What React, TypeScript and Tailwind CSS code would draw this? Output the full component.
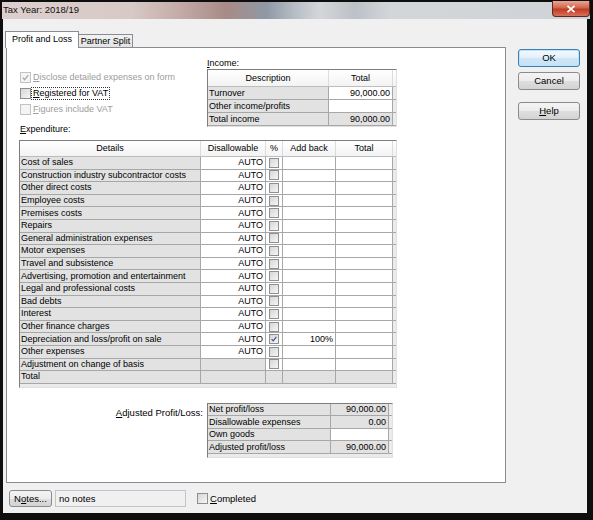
import React from "react";

const expenditure = [
  "Cost of sales",
  "Construction industry subcontractor costs",
  "Other direct costs",
  "Employee costs",
  "Premises costs",
  "Repairs",
  "General administration expenses",
  "Motor expenses",
  "Travel and subsistence",
  "Advertising, promotion and entertainment",
  "Legal and professional costs",
  "Bad debts",
  "Interest",
  "Other finance charges",
  "Depreciation and loss/profit on sale",
  "Other expenses",
  "Adjustment on change of basis",
  "Total",
];

function Tick({ color }: { color: string }) {
  return (
    <svg viewBox="0 0 10 10" className="w-full h-full">
      <polyline points="2,5.2 4,7.4 8,2.4" fill="none" stroke={color} strokeWidth="1.4" />
    </svg>
  );
}

function Box({ small, checked, disabled }: { small?: boolean; checked?: boolean; disabled?: boolean }) {
  const size = small ? "w-[10px] h-[10px]" : "w-[11px] h-[11px]";
  const look = disabled
    ? "border-[#c2c2c2] bg-[#f4f4f4]"
    : "border-[#8e8f8f] bg-[linear-gradient(135deg,#d4d6d8,#f6f6f6)]";
  return (
    <div className={`${size} ${look} border shrink-0 flex items-center justify-center`}>
      {checked && <Tick color={disabled ? "#a8a8a8" : "#3d4f8f"} />}
    </div>
  );
}

function WinButton({ children, primary }: { children: React.ReactNode; primary?: boolean }) {
  const look = primary
    ? "border-[#3c7fb1] bg-[linear-gradient(#f3f9fd,#e3f1fb_50%,#cfe7f7_51%,#c5e2f6)] shadow-[inset_0_0_0_1px_#bfe3fa]"
    : "border-[#8b8b8b] bg-[linear-gradient(#f4f4f4,#ececec_50%,#dedede_51%,#d3d3d3)]";
  return (
    <div className={`${look} w-[62px] h-[18px] border rounded-[3px] flex items-center justify-center text-[9.5px] text-black`}>
      {children}
    </div>
  );
}

function Cell({
  w,
  gray,
  right,
  center,
  children,
}: {
  w: string;
  gray?: boolean;
  right?: boolean;
  center?: boolean;
  children?: React.ReactNode;
}) {
  const align = right ? "justify-end pr-[2px]" : center ? "justify-center" : "pl-[1px]";
  return (
    <div
      className={`${w} ${gray ? "bg-[#e2e2e2]" : "bg-white"} ${align} h-full shrink-0 border-r border-[#a7a7a7] flex items-center whitespace-nowrap overflow-hidden`}
    >
      {children}
    </div>
  );
}

function HeadCell({ w, children }: { w: string; children?: React.ReactNode }) {
  return (
    <div className={`${w} h-full shrink-0 border-r border-[#dcdcdc] flex items-center justify-center`}>{children}</div>
  );
}

function IncomeTable() {
  const rows = [
    { label: "Turnover", value: "90,000.00", white: true },
    { label: "Other income/profits", value: "", white: true },
    { label: "Total income", value: "90,000.00", white: false },
  ];
  return (
    <div className="w-[190px] border border-t-[#7d7d7d] border-l-[#7d7d7d] border-r-[#e0e0e0] border-b-[#e0e0e0] bg-[#ebebeb]">
      <div className="h-[17px] flex bg-[linear-gradient(#ffffff,#f3f3f3)] border-b border-[#bdbdbd]">
        <HeadCell w="w-[121px]">Description</HeadCell>
        <HeadCell w="w-[64px]">Total</HeadCell>
      </div>
      {rows.map((r) => (
        <div key={r.label} className="h-[13px] flex border-b border-[#a7a7a7]">
          <Cell w="w-[121px]" gray>
            {r.label}
          </Cell>
          <Cell w="w-[64px]" gray={!r.white} right>
            {r.value}
          </Cell>
        </div>
      ))}
    </div>
  );
}

function ExpenditureTable() {
  return (
    <div className="w-[378px] border border-t-[#7d7d7d] border-l-[#7d7d7d] border-r-[#e0e0e0] border-b-[#e0e0e0] bg-[#ebebeb] pb-[3px]">
      <div className="h-[16px] flex bg-[linear-gradient(#ffffff,#f3f3f3)] border-b border-[#bdbdbd]">
        <HeadCell w="w-[181px]">Details</HeadCell>
        <HeadCell w="w-[65px]">Disallowable</HeadCell>
        <HeadCell w="w-[17px]">%</HeadCell>
        <HeadCell w="w-[53px]">Add back</HeadCell>
        <HeadCell w="w-[57px]">Total</HeadCell>
      </div>
      {expenditure.map((name) => {
        const isTotal = name === "Total";
        const isAdj = name.startsWith("Adjustment");
        const isDep = name.startsWith("Depreciation");
        return (
          <div key={name} className="h-[12.6px] flex border-b border-[#a7a7a7]">
            <Cell w="w-[181px]" gray>
              {name}
            </Cell>
            <Cell w="w-[65px]" gray={isTotal || isAdj} right>
              {!isTotal && !isAdj ? "AUTO" : ""}
            </Cell>
            <Cell w="w-[17px]" gray={isTotal} center>
              {!isTotal && <Box small checked={isDep} />}
            </Cell>
            <Cell w="w-[53px]" gray={isTotal} right>
              {isDep ? "100%" : ""}
            </Cell>
            <Cell w="w-[57px]" gray={isTotal} />
          </div>
        );
      })}
    </div>
  );
}

function AdjustedTable() {
  const rows = [
    { label: "Net profit/loss", value: "90,000.00", white: false },
    { label: "Disallowable expenses", value: "0.00", white: false },
    { label: "Own goods", value: "", white: true },
    { label: "Adjusted profit/loss", value: "90,000.00", white: false },
  ];
  return (
    <div className="w-[186px] border border-t-[#7d7d7d] border-l-[#7d7d7d] border-r-[#e0e0e0] border-b-[#e0e0e0] bg-[#ebebeb] pb-[3px]">
      {rows.map((r) => (
        <div key={r.label} className="h-[12.6px] flex border-b border-[#a7a7a7]">
          <Cell w="w-[123px]" gray>
            {r.label}
          </Cell>
          <Cell w="w-[58px]" gray={!r.white} right>
            {r.value}
          </Cell>
        </div>
      ))}
    </div>
  );
}

export default function App() {
  return (
    <div className="w-[593px] h-[520px] bg-[#0e0e0e] flex flex-col pl-[2px] pr-[3px] pb-[7px] font-['Liberation_Sans',Arial,sans-serif] text-[9px] text-black leading-none">
      {/* title bar */}
      <div className="h-[19px] shrink-0 flex items-start justify-between border-t-2 border-[#0e0e0e] bg-[linear-gradient(90deg,#dccfcd_0%,#d8c9c6_22%,#c4aca8_30%,#a88b87_38%,#8f99a6_45%,#b9bfc6_50%,#d4d6d9_54%,#bcc1c7_60%,#d3d6d9_66%,#cfd3d7_100%)]">
        <div className="pl-[1px] pt-[3px] text-[9.5px] text-[#111]">Tax Year: 2018/19</div>
        <div className="w-[38px] h-[16px] -mt-[1px] rounded-b-[4px] border border-t-0 border-[#5e2a20] bg-[linear-gradient(#e8a594,#d2664f_45%,#c03a22_55%,#d7725a)] flex items-center justify-center">
          <svg viewBox="0 0 10 8" className="w-[10px] h-[8px]">
            <path d="M1.5 0.8 L8.5 7.2 M8.5 0.8 L1.5 7.2" stroke="white" strokeWidth="1.8" />
          </svg>
        </div>
      </div>

      {/* client area */}
      <div className="flex-1 ml-[1px] mr-[3px] bg-[#f0f0f0] flex flex-col pt-[12px]">
        <div className="flex">
          <div className="ml-[2px] flex flex-col">
            {/* tabs */}
            <div className="h-[16px] flex items-end">
              <div className="relative z-10 h-[17px] -mb-px w-[74px] bg-white border border-b-0 border-[#898c95] flex items-center justify-center pb-[2px]">
                Profit and Loss
              </div>
              <div className="h-[13px] w-[55px] -ml-px border border-b-0 border-[#898c95] bg-[linear-gradient(#f2f2f2,#e3e3e3)] flex items-center justify-center">
                Partner Split
              </div>
            </div>
            {/* panel */}
            <div className="ml-[1px] w-[500px] h-[436px] bg-white border border-[#898c95] pl-[12px] pt-[9px] flex flex-col">
              <div className="flex">
                <div className="w-[188px] pt-[12px] flex flex-col">
                  <div className="h-[16px] flex items-center gap-[2px] ml-[1px] text-[#9c9c9c]">
                    <Box checked disabled />
                    <span>
                      <span className="underline">D</span>isclose detailed expenses on form
                    </span>
                  </div>
                  <div className="h-[16px] flex items-center gap-[1px] ml-[1px]">
                    <Box />
                    <span className="outline outline-1 outline-dotted outline-[#333] px-[1px] py-[1px]">
                      <span className="underline">R</span>egistered for VAT
                    </span>
                  </div>
                  <div className="h-[16px] flex items-center gap-[2px] ml-[1px] text-[#9c9c9c]">
                    <Box disabled />
                    <span>
                      <span className="underline">F</span>igures include VAT
                    </span>
                  </div>
                  <div className="mt-[7px] h-[11px] ml-[1px] flex items-center">
                    <span>
                      <span className="underline">E</span>xpenditure:
                    </span>
                  </div>
                </div>
                <div className="flex flex-col">
                  <div className="h-[12px] flex items-center">
                    <span>
                      <span className="underline">I</span>ncome:
                    </span>
                  </div>
                  <IncomeTable />
                </div>
              </div>

              <div className="mt-[5px]">
                <ExpenditureTable />
              </div>

              <div className="mt-[15px] flex">
                <div className="w-[188px] pr-[4px] pt-[5px] text-right text-[9.5px]">
                  <span className="underline">A</span>djusted Profit/Loss:
                </div>
                <AdjustedTable />
              </div>
            </div>
          </div>

          {/* right buttons */}
          <div className="ml-[12px] mt-[18px] flex flex-col">
            <WinButton primary>OK</WinButton>
            <div className="mt-[5px]">
              <WinButton>Cancel</WinButton>
            </div>
            <div className="mt-[12px]">
              <WinButton>
                <span className="underline">H</span>elp
              </WinButton>
            </div>
          </div>
        </div>

        {/* bottom row */}
        <div className="mt-[7px] ml-[6px] flex items-center">
          <div className="w-[43px] h-[17px] border border-[#8b8b8b] rounded-[3px] bg-[linear-gradient(#f4f4f4,#ececec_50%,#dedede_51%,#d3d3d3)] flex items-center justify-center text-[9.5px]">
            N<span className="underline">o</span>tes...
          </div>
          <div className="ml-[3px] w-[131px] h-[17px] border border-[#c2c4c9] bg-[#f0f0f0] flex items-center pl-[3px] text-[9.5px]">
            no notes
          </div>
          <div className="ml-[11px] flex items-center gap-[2px]">
            <Box />
            <span className="text-[9.5px]">
              <span className="underline">C</span>ompleted
            </span>
          </div>
        </div>
      </div>
    </div>
  );
}
